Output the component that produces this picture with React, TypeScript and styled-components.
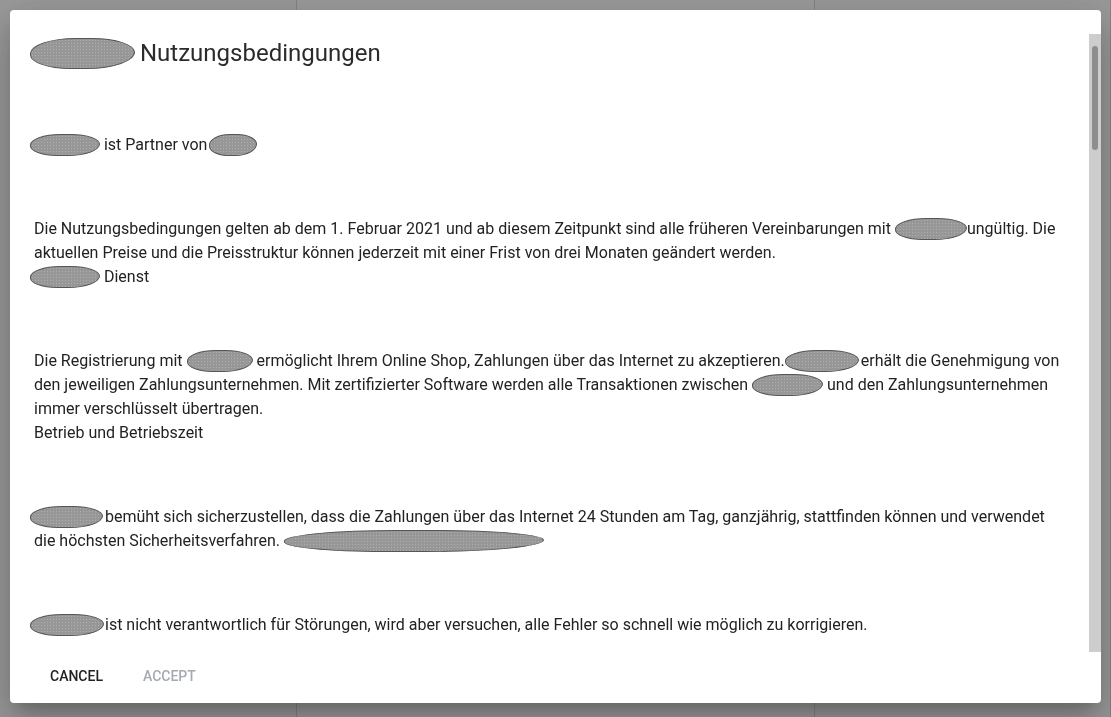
import React from "react";
import styled, { createGlobalStyle } from "styled-components";

const Global = createGlobalStyle`
  html, body { margin: 0; padding: 0; height: 100%; }
  body { font-family: Roboto, "Noto Sans", Arial, sans-serif; overflow: hidden; }
`;

const Page = styled.div`
  height: 717px;
  display: grid;
  grid-template-columns: 297px 518px 1fr;
  background: #ffffff;
`;

const Column = styled.div<{ $edge?: boolean }>`
  background: ${(p) => (p.$edge ? "#f7f7f7" : "#fafafa")};
  border-right: 1px solid #d6d6d6;
`;

const Backdrop = styled.div`
  position: fixed;
  inset: 0;
  background: rgba(0, 0, 0, 0.38);
  display: flex;
  padding: 10px 10px 14px;
  box-sizing: border-box;
`;

const Paper = styled.div`
  position: relative;
  flex: 1;
  height: 100%;
  box-sizing: border-box;
  background: #fff;
  border-radius: 4px;
  display: flex;
  flex-direction: column;
  padding-top: 24px;
  overflow: hidden;
  box-shadow: 0 11px 15px -7px rgba(0, 0, 0, 0.2), 0 24px 38px 3px rgba(0, 0, 0, 0.14),
    0 9px 46px 8px rgba(0, 0, 0, 0.12);
`;

const Scroll = styled.div`
  flex: 1 1 0;
  min-height: 0;
  overflow-y: auto;
  scrollbar-width: none;
  padding: 3px 36px 24px 24px;
  color: #222;
  font-size: 16px;
  line-height: 24px;
  &::-webkit-scrollbar { display: none; }
`;

const Track = styled.div`
  position: absolute;
  right: 0;
  top: 24px;
  bottom: 51px;
  width: 12px;
  background: #cdcdcd;
  display: flex;
  justify-content: center;
  padding-top: 12px;
  box-sizing: border-box;
`;

const Thumb = styled.div`
  width: 6px;
  height: 104px;
  border-radius: 3px;
  background: #8e8e8e;
`;

const Title = styled.h2`
  margin: 0 0 64px;
  font-size: 24px;
  line-height: 32px;
  font-weight: 400;
  color: #2b2b2b;
  display: flex;
  align-items: center;
`;

const Block = styled.div`
  margin-bottom: 60px;
`;

const Line = styled.div``;

const Redact = styled.span<{ $w: number; $h?: number; $ml?: number; $mr?: number }>`
  display: inline-block;
  width: ${(p) => p.$w}px;
  height: ${(p) => p.$h ?? 22}px;
  margin-left: ${(p) => p.$ml ?? 0}px;
  margin-right: ${(p) => p.$mr ?? 0}px;
  vertical-align: ${(p) => (p.$h ? "middle" : "-6px")};
  box-sizing: border-box;
  background-color: #979797;
  background-image: radial-gradient(rgba(255, 255, 255, 0.22) 0.6px, transparent 0.9px);
  background-size: 3px 3px;
  border: 1px solid #555;
  border-radius: 48% 45% 50% 42% / 55% 50% 60% 50%;
  flex: none;
`;

const Actions = styled.div`
  flex: none;
  height: 51px;
  box-sizing: border-box;
  padding: 6px 0 0 24px;
  display: flex;
  align-items: flex-start;
  gap: 8px;
`;

const Button = styled.button<{ $disabled?: boolean }>`
  height: 36px;
  padding: 0 16px;
  border: 0;
  background: transparent;
  font-family: Roboto, sans-serif;
  font-size: 14px;
  font-weight: 500;
  text-transform: uppercase;
  color: ${(p) => (p.$disabled ? "#a5aab0" : "#222")};
  cursor: ${(p) => (p.$disabled ? "default" : "pointer")};
`;

const more: { h: string; t: string }[] = [
  {
    h: "Gebühren",
    t: "Die Gebühren für die Nutzung des Dienstes richten sich nach der jeweils gültigen Preisliste. Alle Preise verstehen sich zuzüglich der gesetzlichen Mehrwertsteuer. Die Abrechnung erfolgt monatlich im Voraus, sofern nichts anderes vereinbart wurde.",
  },
  {
    h: "Zahlungsbedingungen",
    t: "Rechnungen sind innerhalb von 14 Tagen nach Rechnungsdatum ohne Abzug zur Zahlung fällig. Bei Zahlungsverzug ist der Anbieter berechtigt, den Zugang zum Dienst bis zum vollständigen Ausgleich aller offenen Forderungen zu sperren.",
  },
  {
    h: "Pflichten des Kunden",
    t: "Der Kunde verpflichtet sich, seine Zugangsdaten geheim zu halten und vor dem Zugriff Dritter zu schützen. Änderungen der Firmen- oder Kontodaten sind unverzüglich schriftlich mitzuteilen.",
  },
  {
    h: "Haftung",
    t: "Die Haftung für leichte Fahrlässigkeit ist ausgeschlossen, sofern keine wesentlichen Vertragspflichten verletzt werden. Die Haftung für Schäden aus der Verletzung des Lebens, des Körpers oder der Gesundheit bleibt unberührt.",
  },
  {
    h: "Datenschutz",
    t: "Alle personenbezogenen Daten werden gemäß den geltenden Datenschutzbestimmungen verarbeitet und ausschließlich zur Abwicklung der Zahlungen verwendet. Eine Weitergabe an Dritte erfolgt nur, soweit dies zur Vertragserfüllung erforderlich ist.",
  },
  {
    h: "Vertragslaufzeit und Kündigung",
    t: "Der Vertrag wird auf unbestimmte Zeit geschlossen und kann von beiden Parteien mit einer Frist von drei Monaten zum Monatsende gekündigt werden. Das Recht zur außerordentlichen Kündigung bleibt unberührt.",
  },
  {
    h: "Gerichtsstand",
    t: "Es gilt das Recht der Bundesrepublik Deutschland. Sollten einzelne Bestimmungen dieser Nutzungsbedingungen unwirksam sein, bleibt die Wirksamkeit der übrigen Bestimmungen davon unberührt.",
  },
];

export default function App() {
  return (
    <>
      <Global />
      <Page>
        <Column $edge />
        <Column />
        <Column $edge />
      </Page>
      <Backdrop>
        <Paper>
          <Scroll>
            <Title>
              <Redact $w={105} $h={31} $ml={-4} $mr={5} />
              Nutzungsbedingungen
            </Title>
            <Block>
              <Line>
                <Redact $w={70} $ml={-4} /> ist Partner von
                <Redact $w={48} $ml={2} />
              </Line>
            </Block>
            <Block>
              <Line>
                Die Nutzungsbedingungen gelten ab dem 1. Februar 2021 und ab diesem Zeitpunkt sind alle früheren
                Vereinbarungen mit <Redact $w={72} />
                ungültig. Die aktuellen Preise und die Preisstruktur können jederzeit mit einer Frist von drei
                Monaten geändert werden.
              </Line>
              <Line>
                <Redact $w={70} $ml={-4} /> Dienst
              </Line>
            </Block>
            <Block>
              <Line>
                Die Registrierung mit <Redact $w={66} /> ermöglicht Ihrem Online Shop, Zahlungen über das Internet
                zu akzeptieren.
                <Redact $w={74} $mr={2} />
                erhält die Genehmigung von den jeweiligen Zahlungsunternehmen. Mit zertifizierter Software werden
                alle Transaktionen zwischen <Redact $w={71} /> und den Zahlungsunternehmen immer verschlüsselt
                übertragen.
              </Line>
              <Line>Betrieb und Betriebszeit</Line>
            </Block>
            <Block>
              <Line>
                <Redact $w={73} $ml={-4} $mr={2} />
                bemüht sich sicherzustellen, dass die Zahlungen über das Internet 24 Stunden am Tag, ganzjährig,
                stattfinden können und verwendet die höchsten Sicherheitsverfahren. <Redact $w={260} />
              </Line>
            </Block>
            <Block>
              <Line>
                <Redact $w={74} $ml={-4} $mr={1} />
                ist nicht verantwortlich für Störungen, wird aber versuchen, alle Fehler so schnell wie möglich zu
                korrigieren.
              </Line>
            </Block>
            {more.map((b) => (
              <Block key={b.h}>
                <Line>{b.h}</Line>
                <Line>{b.t}</Line>
              </Block>
            ))}
          </Scroll>
          <Track>
            <Thumb />
          </Track>
          <Actions>
            <Button>Cancel</Button>
            <Button $disabled disabled>
              Accept
            </Button>
          </Actions>
        </Paper>
      </Backdrop>
    </>
  );
}
